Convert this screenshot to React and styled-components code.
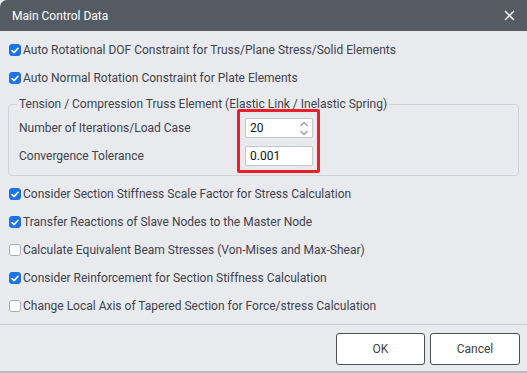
import styled, { createGlobalStyle } from 'styled-components';

const Global = createGlobalStyle`
  html, body {
    margin: 0;
    padding: 0;
    background: #e9eaee;
  }
  * {
    box-sizing: border-box;
  }
`;

const Dialog = styled.div`
  width: 527px;
  height: 373px;
  display: flex;
  flex-direction: column;
  background: #e9eaee;
  border-top-left-radius: 7px;
  overflow: hidden;
  font-family: Roboto, "Noto Sans", sans-serif;
  font-size: 12px;
  color: #3d424d;
`;

const TitleBar = styled.div`
  height: 31px;
  flex: none;
  display: flex;
  align-items: center;
  justify-content: space-between;
  padding: 0 11px 0 12px;
  background: #555b63;
  color: #ffffff;
  font-size: 12px;
`;

const CloseButton = styled.button`
  border: 0;
  background: none;
  padding: 0;
  width: 14px;
  height: 14px;
  display: flex;
  align-items: center;
  justify-content: center;
  cursor: pointer;
`;

const Body = styled.div`
  flex: 1;
  padding: 5px 8px 0;
  display: flex;
  flex-direction: column;
`;

const CheckRow = styled.label`
  height: 28px;
  display: flex;
  align-items: center;
  gap: 2px;
  padding-left: 1px;
  white-space: nowrap;
`;

const Box = styled.span`
  width: 12px;
  height: 12px;
  border-radius: 3px;
  flex: none;
  display: flex;
  align-items: center;
  justify-content: center;
  background: ${props => (props.checked ? '#1a73e8' : '#ffffff')};
  border: 1px solid ${props => (props.checked ? '#1a73e8' : '#a9adb4')};
`;

const Group = styled.fieldset`
  margin: 5px 0 4px;
  padding: 0 10px 5px;
  border: 1px solid #d0d3d9;
  border-radius: 4px;
`;

const Legend = styled.legend`
  padding: 0 2px;
  margin-left: -2px;
  line-height: 14px;
`;

const GroupGrid = styled.div`
  position: relative;
  display: grid;
  grid-template-columns: 226px 68px;
  grid-auto-rows: 28px;
  align-items: center;
  padding-top: 3px;
`;

const Field = styled.div`
  position: relative;
  height: 20px;
  background: #ffffff;
  border: 1px solid #c4c7cd;
  border-radius: 2px;
  display: flex;
  align-items: center;
  padding-left: 4px;
  color: #111;
`;

const Spinner = styled.svg`
  position: absolute;
  right: 2px;
  top: 1px;
`;

const Highlight = styled.div`
  position: absolute;
  left: 218px;
  top: -2px;
  width: 83px;
  height: 64px;
  border: 3px solid #e8202a;
  border-radius: 2px;
  pointer-events: none;
`;

const Footer = styled.div`
  flex: none;
  height: 49px;
  border-top: 1px solid #c6c9cf;
  border-bottom: 2px solid #b9bcc2;
  display: flex;
  justify-content: flex-end;
  align-items: flex-start;
  gap: 5px;
  padding: 8px 7px 0 0;
`;

const Button = styled.button`
  width: ${props => props.w}px;
  height: 32px;
  background: #ffffff;
  border: 1px solid #4a4d52;
  border-radius: 3px;
  font-family: Roboto, "Noto Sans", sans-serif;
  font-size: 12px;
  color: #3d424d;
`;

const Check = ({ checked }) => (
  <Box checked={checked}>
    {checked && (
      <svg width="8" height="7" viewBox="0 0 8 7">
        <path d="M1 3.6 L3.1 5.6 L7 1.3" fill="none" stroke="#fff" strokeWidth="1.6" strokeLinecap="round" strokeLinejoin="round" />
      </svg>
    )}
  </Box>
);

const topOptions = [
  { text: 'Auto Rotational DOF Constraint for Truss/Plane Stress/Solid Elements', checked: true },
  { text: 'Auto Normal Rotation Constraint for Plate Elements', checked: true },
];

const bottomOptions = [
  { text: 'Consider Section Stiffness Scale Factor for Stress Calculation', checked: true },
  { text: 'Transfer Reactions of Slave Nodes to the Master Node', checked: true },
  { text: 'Calculate Equivalent Beam Stresses (Von-Mises and Max-Shear)', checked: false },
  { text: 'Consider Reinforcement for Section Stiffness Calculation', checked: true },
  { text: 'Change Local Axis of Tapered Section for Force/stress Calculation', checked: false },
];

function App() {
  return (
    <>
      <Global />
      <Dialog>
        <TitleBar>
          <span>Main Control Data</span>
          <CloseButton>
            <svg width="11" height="11" viewBox="0 0 11 11">
              <path d="M1 1 L10 10 M10 1 L1 10" stroke="#fff" strokeWidth="1.4" />
            </svg>
          </CloseButton>
        </TitleBar>
        <Body>
          {topOptions.map(o => (
            <CheckRow key={o.text}>
              <Check checked={o.checked} />
              {o.text}
            </CheckRow>
          ))}
          <Group>
            <Legend>Tension / Compression Truss Element (Elastic Link / Inelastic Spring)</Legend>
            <GroupGrid>
              <span>Number of Iterations/Load Case</span>
              <Field>
                20
                <Spinner width="12" height="17" viewBox="0 0 12 17">
                  <path d="M2.5 6 L6 2.5 L9.5 6 M2.5 11 L6 14.5 L9.5 11" fill="none" stroke="#9a9ea6" strokeWidth="1.3" />
                </Spinner>
              </Field>
              <span>Convergence Tolerance</span>
              <Field>0.001</Field>
              <Highlight />
            </GroupGrid>
          </Group>
          {bottomOptions.map(o => (
            <CheckRow key={o.text}>
              <Check checked={o.checked} />
              {o.text}
            </CheckRow>
          ))}
        </Body>
        <Footer>
          <Button w={89}>OK</Button>
          <Button w={90}>Cancel</Button>
        </Footer>
      </Dialog>
    </>
  );
}

export default App;
